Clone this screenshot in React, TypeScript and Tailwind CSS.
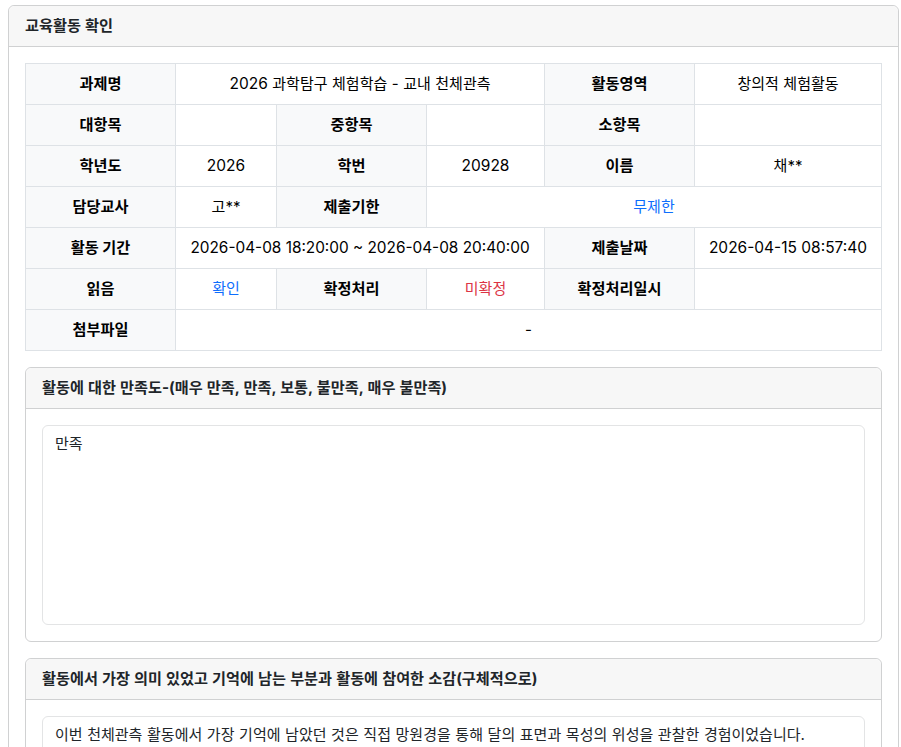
const FONT = "font-['Inter','Noto_Sans_CJK_KR',sans-serif]"

const th = "border border-[#dee2e6] bg-[#f8f9fa] h-[41px] p-0 text-center text-[15.2px] font-bold text-[#000]"
const td = "border border-[#dee2e6] bg-white h-[41px] p-0 text-center font-normal text-[#000] [word-spacing:0.3px]"
const num = "text-[15.5px]"
const title = "h-[41px] rounded-t-md border-b border-[#d0d1d2] bg-[#f7f7f7] px-4 text-[15.2px] leading-[40px] font-bold text-[#212529] [word-spacing:0.5px]"

function SubCard({ heading, children }: { heading: string; children: React.ReactNode }) {
  return (
    <div className="mt-4 rounded-md border border-[#d0d1d2] bg-white">
      <div className={title}>{heading}</div>
      <div className="p-4">
        <div className="h-[200px] rounded-md border border-[#e3e4e5] px-3 py-2 text-[15px] leading-[20px] text-[#212529] [word-spacing:0.4px]">
          {children}
        </div>
      </div>
    </div>
  )
}

export default function App() {
  return (
    <div className={`h-[747px] overflow-hidden bg-white pl-2 pr-[2px] pt-[5px] ${FONT}`}>
      <div className="rounded-md border border-[#d0d1d2] bg-white">
        <div className={title}>교육활동 확인</div>
        <div className="p-4">
          <table className="w-full table-fixed border-collapse text-[15px]">
            <colgroup>
              <col className="w-[150px]" />
              <col className="w-[101px]" />
              <col className="w-[150px]" />
              <col className="w-[118px]" />
              <col className="w-[150px]" />
              <col />
            </colgroup>
            <tbody>
              <tr>
                <th className={th}>과제명</th>
                <td className={td} colSpan={3}><span className={num}>2026</span> 과학탐구 체험학습 - 교내 천체관측</td>
                <th className={th}>활동영역</th>
                <td className={td}>창의적 체험활동</td>
              </tr>
              <tr>
                <th className={th}>대항목</th>
                <td className={td}></td>
                <th className={th}>중항목</th>
                <td className={td}></td>
                <th className={th}>소항목</th>
                <td className={td}></td>
              </tr>
              <tr>
                <th className={th}>학년도</th>
                <td className={`${td} ${num}`}>2026</td>
                <th className={th}>학번</th>
                <td className={`${td} ${num}`}>20928</td>
                <th className={th}>이름</th>
                <td className={td}>채**</td>
              </tr>
              <tr>
                <th className={th}>담당교사</th>
                <td className={td}>고**</td>
                <th className={th}>제출기한</th>
                <td className={`${td} !text-[#0d6efd]`} colSpan={3}>무제한</td>
              </tr>
              <tr>
                <th className={th}>활동 기간</th>
                <td className={`${td} !text-[15.36px] ![word-spacing:0px]`} colSpan={3}>2026-04-08 18:20:00 ~ 2026-04-08 20:40:00</td>
                <th className={th}>제출날짜</th>
                <td className={`${td} ${num} ![word-spacing:0px]`}>2026-04-15 08:57:40</td>
              </tr>
              <tr>
                <th className={th}>읽음</th>
                <td className={`${td} !text-[#0d6efd]`}>확인</td>
                <th className={th}>확정처리</th>
                <td className={`${td} !text-[#dc3545]`}>미확정</td>
                <th className={th}>확정처리일시</th>
                <td className={td}></td>
              </tr>
              <tr>
                <th className={th}>첨부파일</th>
                <td className={td} colSpan={5}>-</td>
              </tr>
            </tbody>
          </table>

          <SubCard heading="활동에 대한 만족도-(매우 만족, 만족, 보통, 불만족, 매우 불만족)">
            만족
          </SubCard>

          <SubCard heading="활동에서 가장 의미 있었고 기억에 남는 부분과 활동에 참여한 소감(구체적으로)">
            이번 천체관측 활동에서 가장 기억에 남았던 것은 직접 망원경을 통해 달의 표면과 목성의 위성을 관찰한 경험이었습니다.
          </SubCard>
        </div>
      </div>
    </div>
  )
}
